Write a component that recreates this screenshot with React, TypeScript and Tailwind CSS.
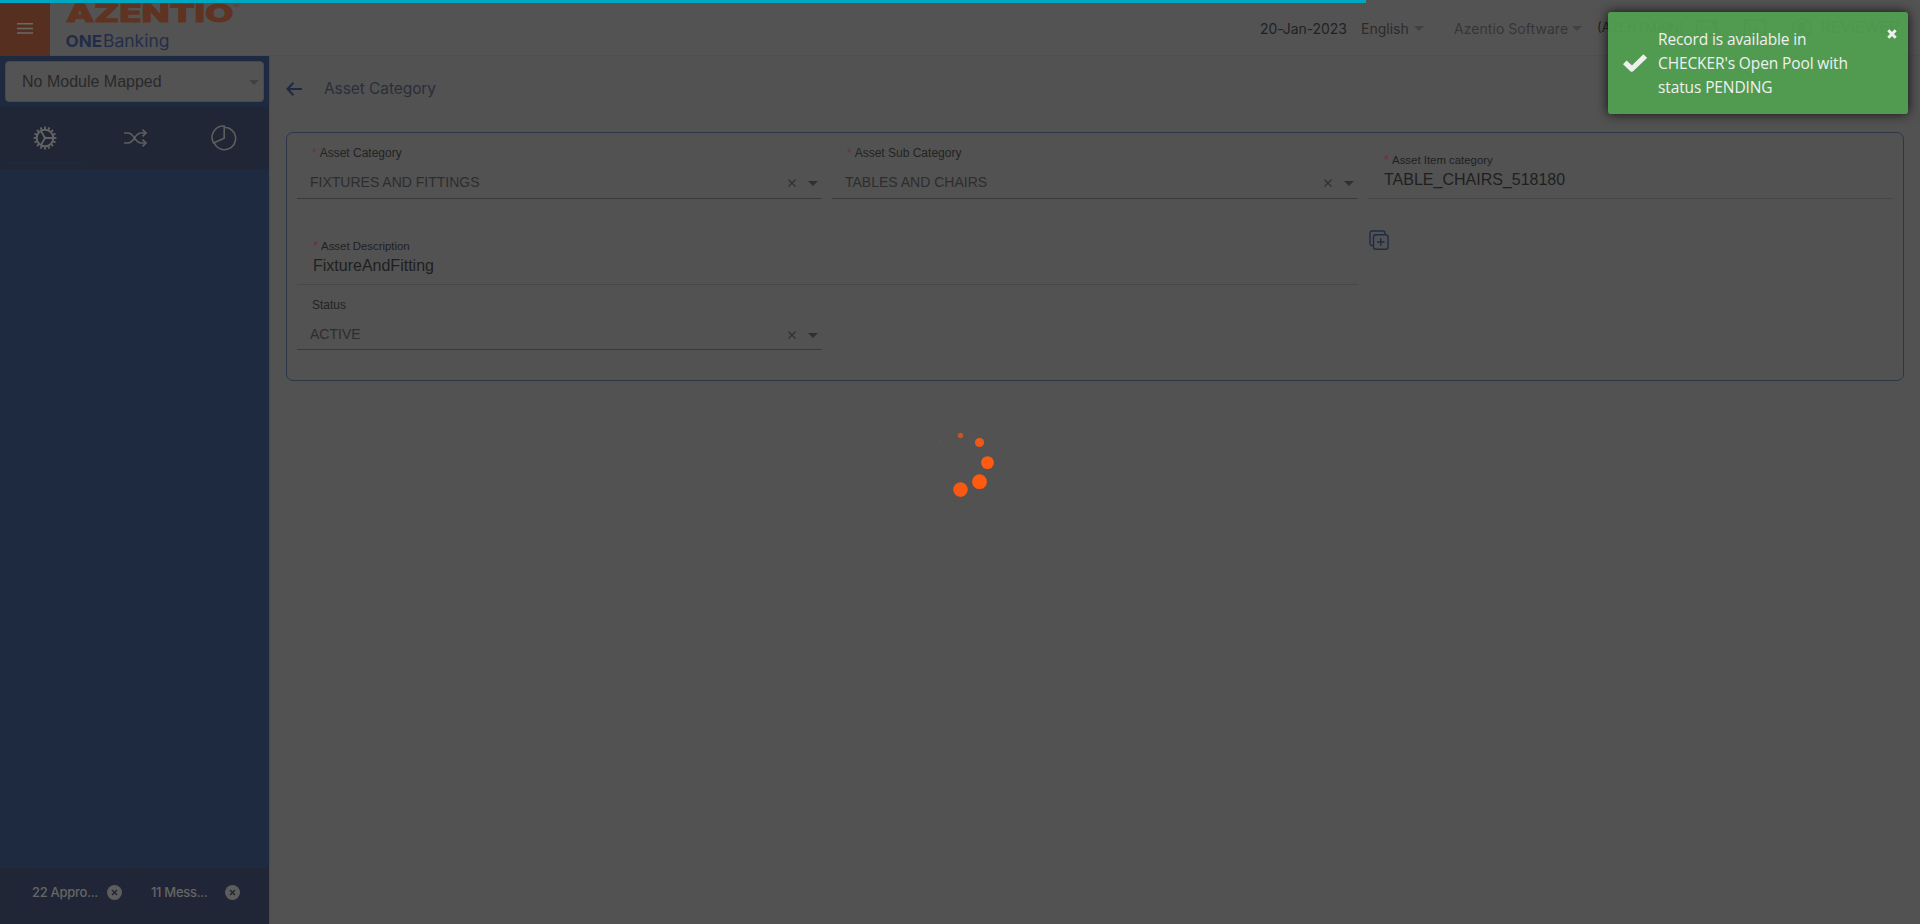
import React from "react";

const Caret = ({ className }: { className: string }) => (
  <svg viewBox="0 0 10 5" className={`h-[5px] w-[10px] shrink-0 ${className}`}>
    <path d="M0 0h10L5 5z" fill="currentColor" />
  </svg>
);

const Cross = () => (
  <svg viewBox="0 0 8 8" className="h-[8px] w-[8px] shrink-0 text-[#303030]">
    <path d="M.5.5l7 7M7.5.5l-7 7" stroke="currentColor" strokeWidth="1.1" fill="none" />
  </svg>
);

function SelectField({ label, value, required }: { label: string; value: string; required?: boolean }) {
  return (
    <div className="flex h-[56px] flex-col border-b border-[#3a3a3a]">
      <div className="flex h-[20px] items-center pl-[15px] text-[12px] leading-[14px] text-[#232323]">
        {required && <span className="mr-[3px] text-[#643638]">*</span>}
        {label}
      </div>
      <div className="mt-[11px] flex h-[16px] items-center pl-[13px] pr-[4px] text-[14px] leading-[16px] text-[#2d2d2d]">
        <span className="flex-1">{value}</span>
        <span className="pt-px">
          <Cross />
        </span>
        <Caret className="ml-[12px] mt-[2px] text-[#2f2f2f]" />
      </div>
    </div>
  );
}

function TextField({ label, value }: { label: string; value: string }) {
  return (
    <div className="flex h-[56px] flex-col border-b border-[#474747] pl-[16px]">
      <div className="mt-[10px] flex h-[14px] items-center text-[11.4px] leading-[14px] text-[#212121]">
        <span className="mr-[3px] text-[13px] text-[#762a38]">*</span>
        {label}
      </div>
      <div className="mt-[4px] text-[16px] leading-[18px] text-[#1f1f1f]">{value}</div>
    </div>
  );
}

function GearIcon() {
  const teeth = Array.from({ length: 16 }, (_, i) => i * 22.5);
  return (
    <svg viewBox="-12 -12 24 24" className="h-[24px] w-[24px]" stroke="#626261" fill="none">
      <circle r="8.3" strokeWidth="2.1" />
      {teeth.map((a) => (
        <path key={a} d="M0-8.8V-11.4" strokeWidth="1.9" transform={`rotate(${a})`} />
      ))}
      <path d="M0 0H8.4M0 0L-4.2-7.3M0 0L-4.2 7.3" strokeWidth="1.8" />
      <circle r="1.4" fill="#626261" stroke="none" />
    </svg>
  );
}

function Header() {
  return (
    <header className="flex h-[56px] shrink-0 border-b border-[#4f4f4f] bg-[#535353]">
      <div className="flex h-[56px] w-[50px] items-center justify-center bg-[#572f20]">
        <svg viewBox="0 0 16 11" className="h-[11px] w-[16px]" stroke="#6a6a68" strokeWidth="1.5">
          <path d="M0 .8h16M0 5.4h16M0 10.1h16" />
        </svg>
      </div>
      <svg viewBox="0 0 190 56" className="h-[56px] w-[190px] overflow-visible" fontFamily="Inter, sans-serif">
        <text x="16" y="22.3" fontSize="24" fontWeight="800" fill="#5f3322" stroke="#5f3322" strokeWidth="1" textLength="167.500" lengthAdjust="spacingAndGlyphs">AZENTIO</text>
        <text x="183" y="7" fontSize="4" fill="#5f3322">TM</text>
        <text x="15.5" y="46.800" fontSize="16.500" fontWeight="700" fill="#222c49" textLength="36.500" lengthAdjust="spacingAndGlyphs">ONE</text>
        <text x="53" y="46.800" fontSize="16.800" fill="#252e49" textLength="66.500" lengthAdjust="spacingAndGlyphs">Banking</text>
      </svg>
      <div className="ml-auto flex h-[56px] items-center font-['Inter'] text-[14px] text-[#222222]">
        <span className="w-[101px] tracking-[-0.1px]">20-Jan-2023</span>
        <span className="w-[53px] text-[#2b2b2b]">English</span>
        <Caret className="text-[#414141]" />
        <span className="ml-[30px] w-[118px] tracking-[0.05px] text-[#363636]">Azentio Software</span>
        <Caret className="text-[#414141]" />
        <span className="ml-[15px] w-[99px] text-[13px]">(AZENTMAIN)</span>
        <svg viewBox="0 0 22 18" className="h-[18px] w-[22px]" fill="none" stroke="#292929" strokeWidth="1.4">
          <path d="M14 2H1v14h19V8M4 6l6 4 5-3" />
          <circle cx="18.5" cy="3.5" r="2.6" fill="#292929" />
        </svg>
        <svg viewBox="0 0 22 18" className="ml-[26px] h-[18px] w-[22px]" fill="none" stroke="#292929" strokeWidth="1.4">
          <path d="M1 1h20v16H1zM4 5l3 3-3 3M9 11h4" />
        </svg>
        <svg viewBox="0 0 20 20" className="ml-[26px] h-[20px] w-[20px]" fill="none" stroke="#292929" strokeWidth="1.4">
          <circle cx="10" cy="10" r="9" />
          <circle cx="10" cy="8" r="3" fill="#292929" />
          <path d="M4 16q6-6 12 0" strokeWidth="2.4" />
        </svg>
        <span className="ml-[9px] w-[99px] text-[15.500px]">REVIEWER</span>
      </div>
    </header>
  );
}

function Chip({ text }: { text: string }) {
  return (
    <div className="flex h-[30px] items-center rounded-full bg-[#202637] pl-[13px] pr-[8px] font-['Inter'] text-[13px] font-medium tracking-[-0.3px] text-[#666663]">
      <span className="flex-1 whitespace-nowrap pt-px">{text}</span>
      <svg viewBox="0 0 15 15" className="h-[15px] w-[15px]">
        <circle cx="7.5" cy="7.5" r="7.5" fill="#5d5d5c" />
        <path d="M5 5l5 5M10 5l-5 5" stroke="#202738" strokeWidth="1.5" />
      </svg>
    </div>
  );
}

function Sidebar() {
  return (
    <aside className="flex w-[269px] shrink-0 flex-col bg-[#1e2a3f]">
      <div className="mx-[5px] mt-[5px] flex h-[41px] items-center rounded-[4px] border border-[#49494b] bg-[#535353] pl-[16px] pr-[4px] text-[16px] text-[#292929]">
        <span className="flex-1">No Module Mapped</span>
        <Caret className="mt-[2px] text-[#414141]" />
      </div>
      <div className="mt-[5px] flex h-[62px] items-start bg-[#202635]">
        <div className="ml-[5px] flex h-[57px] w-[80px] items-center justify-center border-b-2 border-[#1d2a3e] pt-[7px]">
          <GearIcon />
        </div>
        <div className="flex h-[62px] w-[100px] items-center justify-center">
          <svg viewBox="0 0 24 18" className="h-[18px] w-[24px]" fill="none" stroke="#5e5e5d" strokeWidth="1.6">
            <path d="M1 4h4c3 0 4.500 2 6.500 5s3.500 5 6.500 5h5M1 14h4c3 0 4.500-2 6.500-5s3.500-5 6.500-5h5" />
            <path d="M19.500 .7L23 4l-3.500 3.300M19.500 10.700L23 14l-3.500 3.300" />
          </svg>
        </div>
        <div className="flex h-[62px] flex-1 items-center pl-[26px]">
          <svg viewBox="0 0 26 26" className="h-[26px] w-[26px]" fill="none" stroke="#5e5e5d" strokeWidth="1.6">
            <path d="M13.600 2.300A11.200 11.200 0 1 1 3.200 18" />
            <path d="M13.200 1.100V13.200L2.600 18A11.300 11.300 0 0 1 13.200 1.100z" />
          </svg>
        </div>
      </div>
      <div className="mt-auto flex h-[56px] items-start gap-[8px] bg-[#202635] pl-[19px] pt-[9px]">
        <div className="w-[111px]">
          <Chip text="22 Appro..." />
        </div>
        <div className="w-[110px]">
          <Chip text="11 Mess..." />
        </div>
      </div>
    </aside>
  );
}

function Spinner() {
  const dots = [
    { x: 0.2, y: 7.3, r: 1, o: 0.2 },
    { x: 20.5, y: 0.5, r: 2.7, o: 0.65 },
    { x: 39.5, y: 7.5, r: 4.6, o: 0.9 },
    { x: 47.5, y: 27.6, r: 6.4, o: 1 },
    { x: 39.5, y: 46.7, r: 7.4, o: 1 },
    { x: 20.5, y: 54.6, r: 7.3, o: 0.95 },
  ];
  return (
    <svg viewBox="-5 -5 70 70" className="absolute left-[935px] top-[430px] h-[70px] w-[70px]">
      {dots.map((d) => (
        <circle key={d.x + "-" + d.y} cx={d.x} cy={d.y} r={d.r} fill="#ff5a0f" opacity={d.o} />
      ))}
    </svg>
  );
}

function Toast() {
  return (
    <div className="absolute left-[1608px] top-[12px] flex h-[102px] w-[300px] rounded-[3px] bg-[#50a050]/93 pl-[15px] pr-[11px] text-[#f0f0f0] shadow-[0_0_12px_rgba(0,0,0,0.8)]">
      <svg viewBox="0 0 24 18" className="mt-[42px] h-[18px] w-[24px] shrink-0" fill="none" stroke="#efefef" strokeWidth="5.200" strokeLinejoin="round">
        <path d="M1.800 8.300L8.900 15L22.200 2" />
      </svg>
      <p className="ml-[11px] mt-[15px] flex-1 whitespace-nowrap font-['Open_Sans'] text-[15.500px] leading-[24px] tracking-[-0.120px]">
        Record is available in
        <br />
        CHECKER's Open Pool with
        <br />
        status PENDING
      </p>
      <svg viewBox="0 0 10 10" className="mt-[17px] h-[10px] w-[10px] shrink-0">
        <path d="M1.300 1.300l7.400 7.400M8.700 1.300l-7.400 7.400" stroke="#f0f0f0" strokeWidth="2.900" />
      </svg>
    </div>
  );
}

export default function App() {
  return (
    <div className="relative flex h-[924px] w-[1920px] flex-col overflow-hidden bg-[#525252] font-['Liberation_Sans',sans-serif]">
      <Header />
      <div className="flex min-h-0 flex-1">
        <Sidebar />
        <main className="flex-1 border-l border-[#4b4b4b] pl-[16px] pr-[16px]">
          <div className="flex h-[76px] items-center pb-[11px]">
            <svg viewBox="0 0 16 14" className="h-[14px] w-[16px]" fill="none" stroke="#202942" strokeWidth="2">
              <path d="M16 7H1.500M7.500 .8L1.500 7l6 6.200" />
            </svg>
            <h1 className="ml-[22px] font-['Inter'] text-[15.500px] tracking-[-0.080px] text-[#2a2e3a]">Asset Category</h1>
          </div>
          <section className="grid h-[249px] grid-cols-[525px_526px_525px] content-start gap-x-[10px] rounded-[7px] border border-[#2b3747] pl-[10px] pt-[10px]">
            <SelectField label="Asset Category" value="FIXTURES AND FITTINGS" required />
            <SelectField label="Asset Sub Category" value="TABLES AND CHAIRS" required />
            <TextField label="Asset Item category" value="TABLE_CHAIRS_518180" />
            <div className="col-span-2 mt-[30px]">
              <TextField label="Asset Description" value="FixtureAndFitting" />
            </div>
            <svg viewBox="0 0 20 20" className="ml-[1px] mt-[31px] h-[20px] w-[20px]" fill="none" stroke="#202b47" strokeWidth="1.400">
              <path d="M4 15.500H3A2 2 0 0 1 1 13.500V3A2 2 0 0 1 3 1H14A2 2 0 0 1 16 3V4" />
              <rect x="4.500" y="4.700" width="14.500" height="14.500" rx="2.200" />
              <path d="M11.700 8.200v7.500M8 12h7.500" />
            </svg>
            <div className="col-start-1 mt-[9px] [&>div>div:first-child]:mt-px">
              <SelectField label="Status" value="ACTIVE" />
            </div>
          </section>
        </main>
      </div>
      <div className="absolute left-0 top-0 h-[3px] w-[1366px] bg-[#00a7c1]" />
      <Spinner />
      <Toast />
    </div>
  );
}
